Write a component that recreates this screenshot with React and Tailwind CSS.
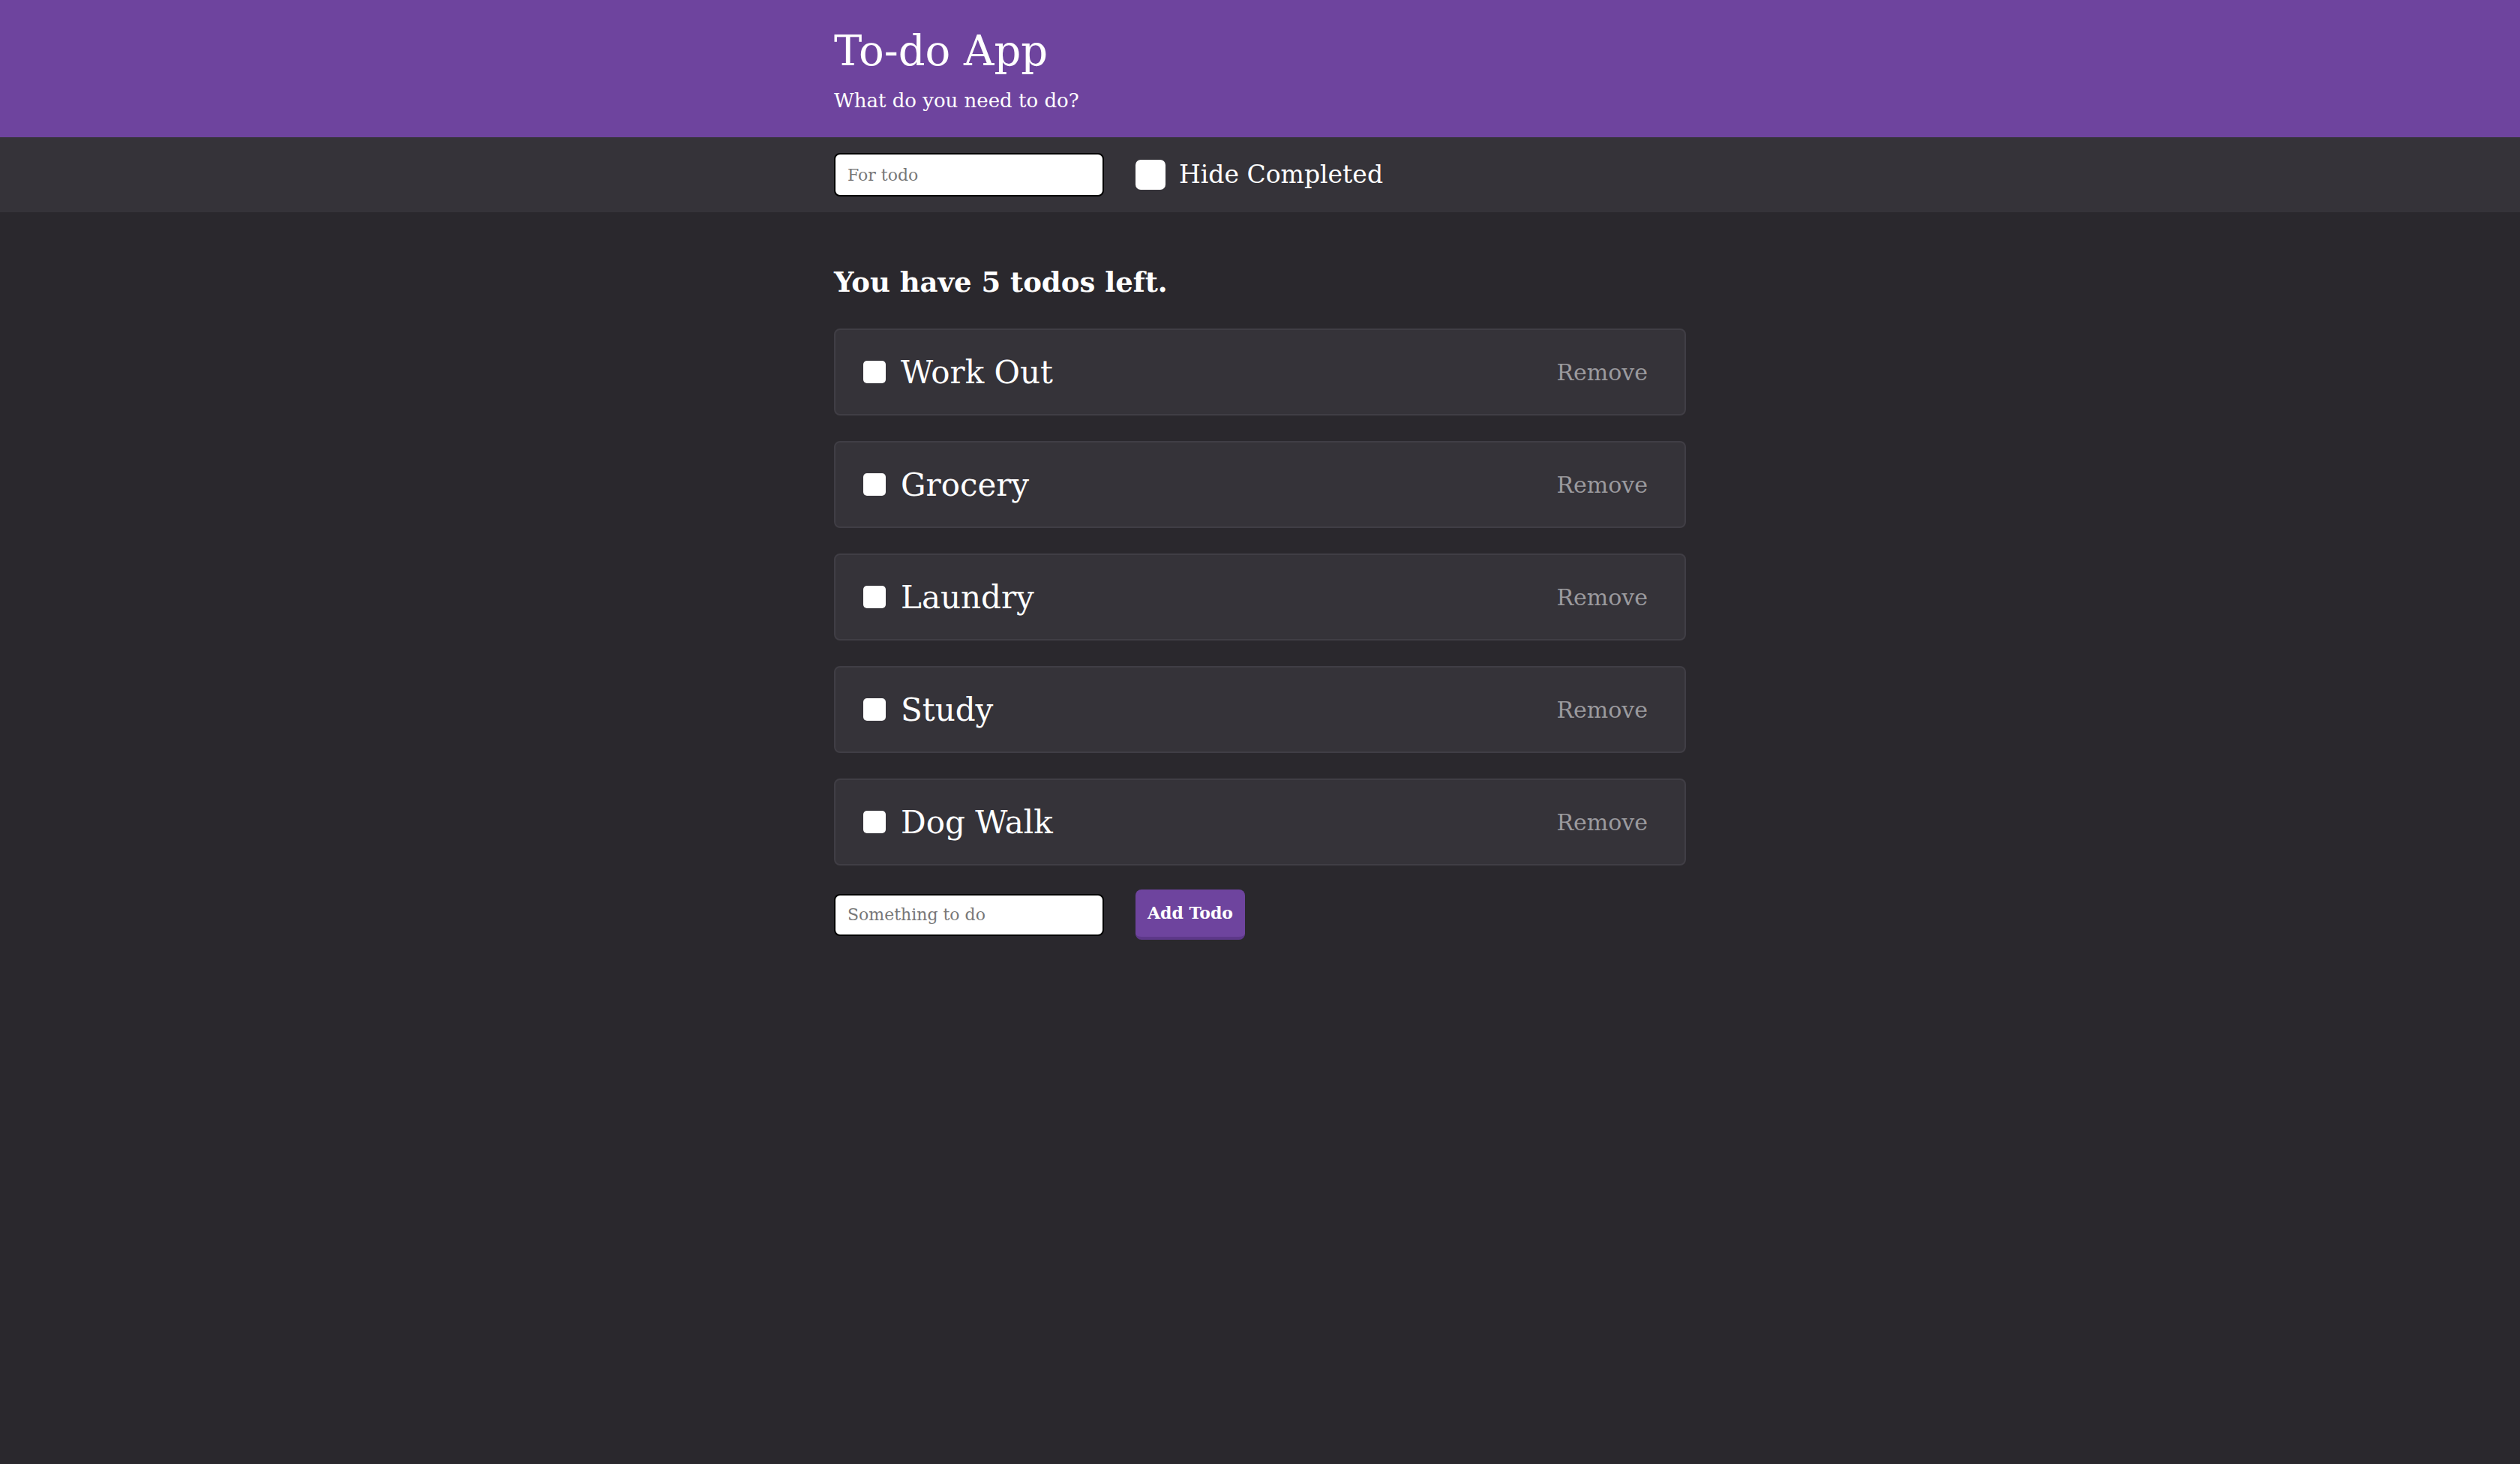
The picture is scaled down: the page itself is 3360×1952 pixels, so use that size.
import React, { useState } from 'react';

const initialTodos = [
  { id: 1, text: 'Work Out', done: false },
  { id: 2, text: 'Grocery', done: false },
  { id: 3, text: 'Laundry', done: false },
  { id: 4, text: 'Study', done: false },
  { id: 5, text: 'Dog Walk', done: false },
];

export default function App() {
  const [todos, setTodos] = useState(initialTodos);
  const [filter, setFilter] = useState('');
  const [hideCompleted, setHideCompleted] = useState(false);
  const [draft, setDraft] = useState('');

  const left = todos.filter((t) => !t.done).length;
  const visible = todos
    .filter((t) => (hideCompleted ? !t.done : true))
    .filter((t) => t.text.toLowerCase().includes(filter.toLowerCase()));

  const toggle = (id) => setTodos(todos.map((t) => (t.id === id ? { ...t, done: !t.done } : t)));
  const remove = (id) => setTodos(todos.filter((t) => t.id !== id));
  const add = () => {
    if (!draft.trim()) return;
    setTodos([...todos, { id: Date.now(), text: draft.trim(), done: false }]);
    setDraft('');
  };

  return (
    <div className="min-h-screen bg-[#2a282d] text-white font-['DejaVu_Serif',serif]">
      <header className="bg-[#6e449e] h-[183px]">
        <div className="w-[1136px] mx-auto pt-[32px]">
          <h1 className="text-[56px] leading-[72px]">To-do App</h1>
          <p className="text-[26px] leading-[36px] mt-[12px]">What do you need to do?</p>
        </div>
      </header>

      <div className="bg-[#353339] h-[100px]">
        <div className="w-[1136px] mx-auto h-full flex items-center gap-[42px]">
          <input
            value={filter}
            onChange={(e) => setFilter(e.target.value)}
            placeholder="For todo"
            className="w-[360px] h-[58px] rounded-[8px] border-2 border-black bg-white px-[16px] text-[22px] text-black placeholder:text-[#777]"
          />
          <label className="flex items-center gap-[18px] text-[33px]">
            <input
              type="checkbox"
              checked={hideCompleted}
              onChange={(e) => setHideCompleted(e.target.checked)}
              className="appearance-none w-[40px] h-[40px] rounded-[7px] bg-white checked:bg-[#6e449e]"
            />
            Hide Completed
          </label>
        </div>
      </div>

      <main className="w-[1136px] mx-auto pt-[70px]">
        <h2 className="text-[37px] font-bold leading-[46px] mb-[39px]">You have {left} todos left.</h2>
        <ul className="flex flex-col gap-[34px]">
          {visible.map((todo) => (
            <li
              key={todo.id}
              className="h-[116px] flex items-center bg-[#353339] border-2 border-[#403e45] rounded-[8px] pl-[37px] pr-[49px]"
            >
              <input
                type="checkbox"
                checked={todo.done}
                onChange={() => toggle(todo.id)}
                className="appearance-none w-[30px] h-[30px] rounded-[5px] bg-white checked:bg-[#6e449e]"
              />
              <span className={`ml-[20px] text-[42px] ${todo.done ? 'line-through text-[#888]' : ''}`}>{todo.text}</span>
              <button onClick={() => remove(todo.id)} className="ml-auto text-[30px] text-[#9b9a9e]">
                Remove
              </button>
            </li>
          ))}
        </ul>
        <div className="flex items-center gap-[42px] mt-[32px]">
          <input
            value={draft}
            onChange={(e) => setDraft(e.target.value)}
            placeholder="Something to do"
            className="w-[360px] h-[56px] rounded-[8px] border-2 border-black bg-white px-[16px] text-[22px] text-black placeholder:text-[#777]"
          />
          <button
            onClick={add}
            className="w-[146px] h-[67px] rounded-[8px] bg-[#6e449e] border-b-[4px] border-[#5d3889] text-[22px] font-bold text-white"
          >
            Add Todo
          </button>
        </div>
      </main>
    </div>
  );
}
